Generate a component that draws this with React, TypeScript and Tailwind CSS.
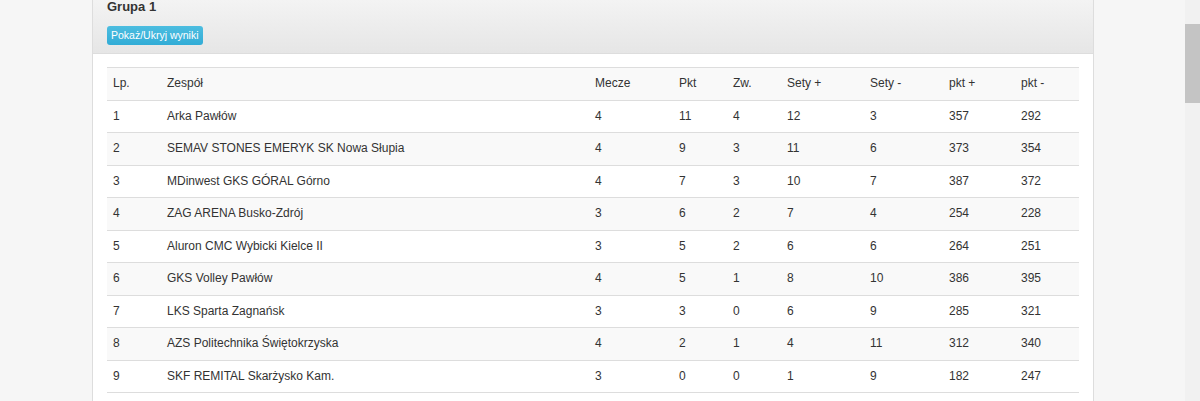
import React from "react";

const rows: (string | number)[][] = [
  [1, "Arka Pawłów", 4, 11, 4, 12, 3, 357, 292],
  [2, "SEMAV STONES EMERYK SK Nowa Słupia", 4, 9, 3, 11, 6, 373, 354],
  [3, "MDinwest GKS GÓRAL Górno", 4, 7, 3, 10, 7, 387, 372],
  [4, "ZAG ARENA Busko-Zdrój", 3, 6, 2, 7, 4, 254, 228],
  [5, "Aluron CMC Wybicki Kielce II", 3, 5, 2, 6, 6, 264, 251],
  [6, "GKS Volley Pawłów", 4, 5, 1, 8, 10, 386, 395],
  [7, "LKS Sparta Zagnańsk", 3, 3, 0, 6, 9, 285, 321],
  [8, "AZS Politechnika Świętokrzyska", 4, 2, 1, 4, 11, 312, 340],
  [9, "SKF REMITAL Skarżysko Kam.", 3, 0, 0, 1, 9, 182, 247],
];

const headers = ["Lp.", "Zespół", "Mecze", "Pkt", "Zw.", "Sety +", "Sety -", "pkt +", "pkt -"];
const widths = ["w-[54px]", "w-[428px]", "w-[84px]", "w-[54px]", "w-[54px]", "w-[83px]", "w-[79px]", "w-[72px]", "w-[64px]"];

function Row({ cells, gray }: { cells: (string | number)[]; gray: boolean }) {
  return (
    <div className={`flex border-t border-[#dddddd] ${gray ? "bg-[#f9f9f9]" : "bg-white"}`}>
      {cells.map((c, i) => (
        <div key={i} className={`${widths[i]} shrink-0 pl-[6px] py-[8px] leading-[15.5px]`}>
          {c}
        </div>
      ))}
    </div>
  );
}

export default function App() {
  return (
    <div
      className="flex h-[401px] w-[1200px] overflow-hidden bg-[#f6f6f6] text-[12px] text-[#333333]"
      style={{ fontFamily: '"Liberation Sans", Arial, sans-serif' }}
    >
      <div className="w-[92px] shrink-0" />
      <div className="flex w-[1002px] shrink-0 flex-col border-x border-[#dddddd] bg-white">
        <div className="h-[54px] shrink-0 border-b border-[#dddddd] bg-gradient-to-b from-[#f3f3f3] to-[#e6e6e6] px-[14px]">
          <div className="text-[13px] font-bold leading-[14px] text-[#333333]">Grupa 1</div>
          <div className="mt-[12px] inline-flex h-[19px] items-center rounded-[3px] bg-gradient-to-b from-[#4cbde0] to-[#31acd6] px-[4px] text-[10.5px] text-white">
            Pokaż/Ukryj wyniki
          </div>
        </div>
        <div className="px-[14px] pt-[13px]">
          <div className="border-b border-[#dddddd]">
            <Row cells={headers} gray={true} />
            {rows.map((r, i) => (
              <Row key={i} cells={r} gray={i % 2 === 1} />
            ))}
          </div>
        </div>
      </div>
      <div className="flex-1" />
      <div className="flex w-[15px] shrink-0 flex-col bg-[#f1f1f1]">
        <div className="h-[24px]" />
        <div className="h-[79px] bg-[#c4c4c4]" />
      </div>
    </div>
  );
}
